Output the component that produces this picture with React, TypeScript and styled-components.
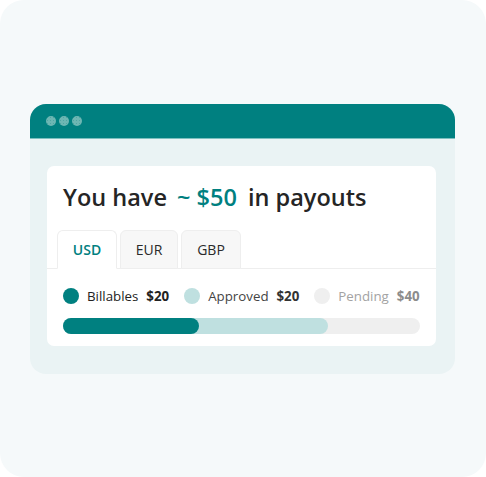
import React from 'react';
import styled, { createGlobalStyle } from 'styled-components';

const GlobalStyle = createGlobalStyle`
  html, body {
    margin: 0;
    padding: 0;
    background: #fff;
  }
  body {
    font-family: 'Open Sans', 'Noto Sans', sans-serif;
  }
`;

const tabs = ['USD', 'EUR', 'GBP'];

const legend = [
  { label: 'Billables', value: '$20', dot: '#008080', text: '#222', amount: '#222' },
  { label: 'Approved', value: '$20', dot: '#bfe0e0', text: '#444', amount: '#333' },
  { label: 'Pending', value: '$40', dot: '#efefef', text: '#a3a3a3', amount: '#8c8c8c' },
];

const App = () => {
  return (
    <>
      <GlobalStyle />
      <Frame>
        <Window>
          <TitleBar>
            <Dot />
            <Dot />
            <Dot />
          </TitleBar>
          <WindowBody>
            <Card>
              <Heading>
                You have <Amount>~ $50</Amount> in payouts
              </Heading>
              <TabRow>
                {tabs.map((t, i) => (
                  <Tab key={t} active={i === 0}>
                    {t}
                  </Tab>
                ))}
              </TabRow>
              <Legend>
                {legend.map((l) => (
                  <LegendItem key={l.label}>
                    <Swatch color={l.dot} />
                    <LegendLabel color={l.text}>{l.label}</LegendLabel>
                    <LegendValue color={l.amount}>{l.value}</LegendValue>
                  </LegendItem>
                ))}
              </Legend>
              <Track>
                <Segment color="#bfe0e0" style={{ width: '74.2%' }}>
                  <Segment color="#008080" style={{ width: '51.3%' }} />
                </Segment>
              </Track>
            </Card>
          </WindowBody>
        </Window>
      </Frame>
    </>
  );
};

// Styled Components
const Frame = styled.div`
  width: 486px;
  height: 477px;
  box-sizing: border-box;
  border-radius: 24px;
  background: #f5f9fa;
  display: flex;
  align-items: center;
  padding-left: 30px;
`;

const Window = styled.div`
  width: 425px;
  height: 270px;
  border-radius: 16px;
  overflow: hidden;
  background: #eaf3f4;
  display: flex;
  flex-direction: column;
`;

const TitleBar = styled.div`
  height: 34px;
  background: #008080;
  border-bottom: 1px solid #7cbfbf;
  display: flex;
  align-items: center;
  gap: 3px;
  padding: 1px 0 0 16px;
  box-sizing: content-box;
  margin-top: -1px;
`;

const Dot = styled.span`
  width: 10px;
  height: 10px;
  border-radius: 50%;
  background-color: #6db6b3;
  background-image: radial-gradient(circle, #4fa6a3 0.6px, transparent 0.9px);
  background-size: 3px 3px;
`;

const WindowBody = styled.div`
  flex: 1;
  padding: 27px 19px 0 17px;
`;

const Card = styled.div`
  background: #fff;
  border-radius: 7px;
  height: 180px;
  box-sizing: border-box;
  padding-top: 16px;
`;

const Heading = styled.h1`
  margin: 0;
  padding-left: 16px;
  font-size: 23.5px;
  line-height: 31px;
  font-weight: 600;
  color: #252525;
`;

const Amount = styled.span`
  color: #008080;
  margin: 0 5px 0 4px;
`;

const TabRow = styled.div`
  display: flex;
  gap: 3px;
  margin-top: 17px;
  padding-left: 10px;
  border-bottom: 1px solid #eeeeee;
`;

const Tab = styled.div<{ active?: boolean }>`
  width: 60px;
  height: 39px;
  box-sizing: border-box;
  margin-bottom: -1px;
  display: flex;
  align-items: center;
  justify-content: center;
  font-size: 14px;
  font-weight: ${(p) => (p.active ? 600 : 400)};
  color: ${(p) => (p.active ? '#008080' : '#2a2a2a')};
  background: ${(p) => (p.active ? '#fff' : '#f7f7f7')};
  border: 1px solid #eeeeee;
  border-bottom-color: ${(p) => (p.active ? '#fff' : '#eeeeee')};
  border-radius: 6px 6px 0 0;
  &:nth-child(2) {
    width: 58px;
  }
`;

const Legend = styled.div`
  display: flex;
  align-items: center;
  gap: 15px;
  margin-top: 17px;
  padding-left: 16px;
  height: 20px;
`;

const LegendItem = styled.div`
  display: flex;
  align-items: center;
  font-size: 13.3px;
`;

const Swatch = styled.span<{ color: string }>`
  width: 16px;
  height: 16px;
  border-radius: 50%;
  background: ${(p) => p.color};
  margin-right: 8px;
`;

const LegendLabel = styled.span<{ color: string }>`
  color: ${(p) => p.color};
  margin-right: 8px;
`;

const LegendValue = styled.span<{ color: string }>`
  color: ${(p) => p.color};
  font-weight: 700;
`;

const Track = styled.div`
  margin: 12px 16px 0 16px;
  height: 16px;
  border-radius: 8px;
  background: #efefef;
  width: 357px;
`;

const Segment = styled.div<{ color: string }>`
  height: 16px;
  border-radius: 8px;
  background: ${(p) => p.color};
`;

export default App;
